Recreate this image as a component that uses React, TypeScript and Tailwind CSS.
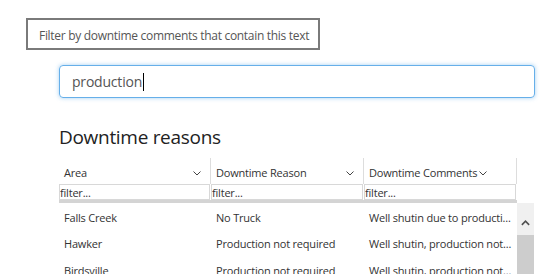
const rows = [
  { area: 'Falls Creek', reason: 'No Truck', comment: 'Well shutin due to producti...' },
  { area: 'Hawker', reason: 'Production not required', comment: 'Well shutin, production not...' },
  { area: 'Birdsville', reason: 'Production not required', comment: 'Well shutin, production not...' },
]

const headers = ['Area', 'Downtime Reason', 'Downtime Comments']

const Chevron = () => (
  <svg width="8" height="5" viewBox="0 0 8 5" className="shrink-0">
    <path d="M0.5 0.5 L4 4 L7.5 0.5" fill="none" stroke="#444" strokeWidth="1" />
  </svg>
)

export default function App() {
  return (
    <div className="h-[274px] w-[545px] overflow-hidden bg-white font-['Open_Sans',sans-serif] text-[#333]">
      <div className="pl-[26px] pt-[18px]">
        <div className="flex h-[32px] w-[294px] items-center border-2 border-[#7a7a7a] pl-[11px] pt-[3px] text-[12px] tracking-[-0.3px] text-[#555]">
          Filter by downtime comments that contain this text
        </div>
      </div>

      <div className="pl-[59px] pr-[10px] pt-[15px]">
        <div className="flex h-[33px] items-center rounded-[4px] border border-[#66afe9] pl-[12px] text-[14px] text-[#555] shadow-[0_0_4px_rgba(102,175,233,0.6)]">
          <span className="tracking-[-0.2px]">production</span>
          <span className="ml-[1px] h-[18px] w-px bg-black" />
        </div>

        <h2 className="mt-[27px] text-[19px] leading-[24px] tracking-[-0.3px] text-[#222]">Downtime reasons</h2>

        <div className="mt-[9px] w-[458px]">
          <div className="grid grid-cols-[152px_153px_153px]">
            {headers.map((h, i) => (
              <div
                key={h}
                className="flex h-[26px] items-center border-r border-[#ddd] pl-[5px] pr-[9px] pt-[4px] text-[11px] tracking-[-0.2px] text-[#333]"
              >
                <span className={i === 2 ? 'mr-[2px]' : 'flex-1'}>{h}</span>
                <Chevron />
              </div>
            ))}
          </div>
          <div className="grid grid-cols-[152px_153px_153px] border-b-[3px] border-[#d4d4d4]">
            {headers.map((h) => (
              <div key={h + 'f'} className="pr-px">
                <input
                  readOnly
                  value="filter..."
                  className="block h-[16px] w-full border border-[#d8d8d8] px-0 text-[11px] leading-[14px] tracking-[-0.2px] text-[#333] outline-none"
                />
              </div>
            ))}
          </div>
        </div>

        <div className="flex">
          <div className="grid w-[458px] grid-cols-[152px_153px_152px] text-[11px] tracking-[-0.2px] text-[#333]">
            {rows.map((r) => (
              <div key={r.area} className="contents">
                <div className="flex h-[25px] items-center pl-[5px] pt-[5px]">{r.area}</div>
                <div className="flex h-[25px] items-center pl-[5px] pt-[5px]">{r.reason}</div>
                <div className="flex h-[25px] items-center pl-[5px] pt-[5px]">{r.comment}</div>
              </div>
            ))}
          </div>

          <div className="flex h-[80px] w-[17px] flex-col items-center bg-[#f0f0f0]">
            <svg width="11" height="7" viewBox="0 0 11 7" className="mt-[17px]">
              <path d="M1 6 L5.5 1.5 L10 6" fill="none" stroke="#505050" strokeWidth="2" />
            </svg>
            <div className="mt-[9px] h-[60px] w-[17px] bg-[#cdcdcd]" />
          </div>
        </div>
      </div>
    </div>
  )
}
